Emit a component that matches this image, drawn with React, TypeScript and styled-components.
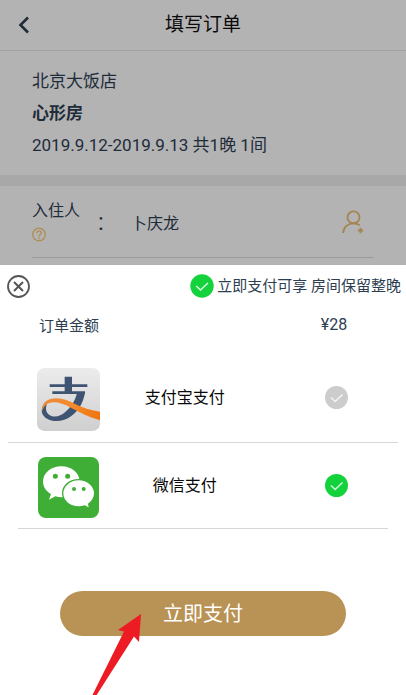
import React, { useState } from "react";
import styled, { createGlobalStyle } from "styled-components";

const GlobalStyle = createGlobalStyle`
  * { box-sizing: border-box; }
  body {
    margin: 0;
    background: #fff;
    color: #2c3e50;
    font-family: Roboto, "Noto Sans CJK SC", sans-serif;
  }
  button { padding: 0; border: 0; background: none; color: inherit; font: inherit; cursor: pointer; }
`;

const Screen = styled.div`
  display: flex;
  flex-direction: column;
  min-height: 100vh;
  overflow: hidden;
`;

const DimmedPage = styled.main`
  background: #b3b3b3;
  color: #202c3a;
  padding-bottom: 7px;
`;

const Header = styled.header`
  display: grid;
  grid-template-columns: 48px 1fr 48px;
  align-items: center;
  height: 51px;
  border-bottom: 1px solid #a2a2a2;
`;

const BackButton = styled.button`
  display: grid;
  place-items: center;
  height: 50px;
`;

const Title = styled.h1`
  margin: 0;
  color: #0a0a0a;
  font-size: 19px;
  font-weight: 400;
  line-height: 50px;
  text-align: center;
`;

const Stay = styled.section`
  padding: 14px 32px;
  border-bottom: 11px solid #a8a8a8;
`;

const StayLine = styled.p<{ $strong?: boolean }>`
  margin: 0;
  font-size: 17px;
  font-weight: ${(p) => (p.$strong ? 700 : 400)};
  line-height: 32px;
`;

const Guest = styled.section`
  display: flex;
  align-items: center;
  height: 72px;
  margin: 0 32px;
  border-bottom: 1px solid #969a9f;
  font-size: 16px;
`;

const GuestLabel = styled.div`
  display: flex;
  flex-direction: column;
  align-items: flex-start;
  gap: 4px;
  width: 66px;
  padding-bottom: 2px;
  line-height: 24px;
`;

const HelpButton = styled.button`
  display: flex;
`;

const Colon = styled.span`
  width: 33px;
  font-size: 24px;
  line-height: 24px;
`;

const GuestName = styled.span`
  flex: 1;
`;

const AddGuest = styled.button`
  display: flex;
  margin-right: 10px;
`;

const Sheet = styled.section`
  flex: 1;
  background: #fff;
`;

const Notice = styled.div`
  display: flex;
  align-items: center;
  justify-content: space-between;
  height: 42px;
  padding: 0 5px 0 7px;
`;

const CloseButton = styled.button`
  display: flex;
`;

const NoticeText = styled.span`
  display: flex;
  align-items: center;
  gap: 3px;
  font-size: 15px;
  line-height: 24px;
`;

const Columns = styled.div`
  display: grid;
  grid-template-columns: 34% 23% 1fr 34%;
  align-items: center;
  justify-items: center;
`;

const AmountRow = styled(Columns)`
  height: 34px;
  margin-bottom: 2px;
  font-size: 15px;
`;

const Amount = styled.span`
  grid-column: 4;
  padding-right: 6px;
  font-size: 16px;
`;

const Methods = styled.fieldset`
  margin: 0;
  padding: 0;
  border: 0;
`;

const Method = styled(Columns).attrs({ as: "label" })<{ $tall?: boolean }>`
  height: ${(p) => (p.$tall ? 99 : 85)}px;
  padding-top: ${(p) => (p.$tall ? 10 : 0)}px;
  color: #0a0a0a;
  font-size: 16px;
  white-space: nowrap;
  cursor: pointer;
`;

const MethodLogo = styled.span`
  display: flex;
  padding: 3px 2px 0 0;
`;

const MethodName = styled.span`
  padding-bottom: 4px;
`;

const Divider = styled.hr<{ $inset: number }>`
  height: 1px;
  margin: 0 ${(p) => p.$inset}px;
  border: 0;
  background: #d6d6d6;
`;

const RadioMark = styled.span`
  display: grid;
  grid-column: 4;
  place-items: center;
  > * { grid-area: 1 / 1; }
  > svg { pointer-events: none; }
`;

const Radio = styled.input`
  appearance: none;
  width: 23px;
  height: 23px;
  margin: 0;
  border-radius: 50%;
  background: #ccc;
  cursor: pointer;
  &:checked { background: #14d23c; }
`;

const PayArea = styled.div`
  position: relative;
  width: 70.5%;
  margin: 62px auto 0;
`;

const PayButton = styled.button`
  display: block;
  width: 100%;
  height: 45px;
  border-radius: 23px;
  background: #b99256;
  color: #fff;
  font-size: 20px;
  line-height: 44px;
`;

const Pointer = styled.svg`
  position: absolute;
  top: 23px;
  left: 32px;
  pointer-events: none;
`;

const Tick = () => (
  <svg width="23" height="23" viewBox="0 0 23 23" fill="none" aria-hidden="true">
    <path d="M6 11.5 10.2 15.5 17.5 8.5" stroke="#fff" strokeOpacity=".8" strokeWidth="1.5" />
  </svg>
);

const NoticeCheck = () => (
  <svg width="24" height="24" viewBox="0 0 24 24" fill="none" aria-hidden="true">
    <circle cx="12" cy="12" r="11.7" fill="#14d23c" />
    <path d="M6.2 12 10.5 16 18 9" stroke="#fff" strokeOpacity=".85" strokeWidth="1.5" />
  </svg>
);

const AlipayLogo = () => (
  <svg width="63" height="63" viewBox="0 0 189 189" aria-hidden="true">
    <defs>
      <linearGradient id="silver" x1="0" y1="0" x2="0" y2="1">
        <stop offset="0" stopColor="#ececec" />
        <stop offset="1" stopColor="#cfcfcf" />
      </linearGradient>
      <linearGradient id="orange" x1="0" y1="0" x2="1" y2="0">
        <stop offset="0" stopColor="#e98a3c" />
        <stop offset=".5" stopColor="#f58a2d" />
        <stop offset="1" stopColor="#ee7510" />
      </linearGradient>
    </defs>
    <rect width="189" height="189" rx="22" fill="url(#silver)" />
    <g fill="#3f5472">
      <path d="M83 26h22v23h46v8h-46v13h39v8H46v-8h37V57H38v-8h45z" />
      <path d="M120 74h24c-6 32-20 54-41 70-21 17-54 19-73 8-17-10-20-27-10-42l10-4c-5 15-4 26 6 34 14 10 34 6 48-7 18-16 31-35 36-59z" />
    </g>
    <path
      d="M16 129c-3-17 7-32 25-36 24-6 48 2 72 14 26 13 51 20 76 24v26c-33-9-61-24-87-38-25-13-45-19-62-15-13 3-20 12-24 25z"
      fill="url(#orange)"
    />
  </svg>
);

const WechatLogo = () => (
  <svg width="61" height="61" viewBox="0 0 183 183" aria-hidden="true">
    <rect width="183" height="183" rx="24" fill="#3fae36" />
    <path
      d="M70 28c31 0 55 20 55 46 0 27-24 47-55 47-6 0-12-1-18-3l-19 10 6-17C24 102 15 89 15 74c0-26 24-46 55-46z"
      fill="#fff"
    />
    <path
      d="M122 68c27 0 48 18 48 41 0 13-7 24-18 32l3 14-15-8c-6 2-12 3-18 3-27 0-48-18-48-41s21-41 48-41z"
      fill="#fff"
      stroke="#3fae36"
      strokeWidth="4"
    />
    <g fill="#3fae36">
      <circle cx="52" cy="58" r="7.5" />
      <circle cx="89" cy="58" r="7.5" />
      <circle cx="108" cy="96" r="6" />
      <circle cx="137" cy="96" r="6" />
    </g>
  </svg>
);

export default function App() {
  const [method, setMethod] = useState("wechat");

  return (
    <Screen>
      <GlobalStyle />
      <DimmedPage>
        <Header>
          <BackButton aria-label="返回">
            <svg width="12" height="18" viewBox="0 0 12 18" fill="none">
              <path d="M10 1.5 2.5 9l7.5 7.5" stroke="#202c3a" strokeWidth="2.6" />
            </svg>
          </BackButton>
          <Title>填写订单</Title>
        </Header>
        <Stay>
          <StayLine>北京大饭店</StayLine>
          <StayLine $strong>心形房</StayLine>
          <StayLine>2019.9.12-2019.9.13 共1晚 1间</StayLine>
        </Stay>
        <Guest>
          <GuestLabel>
            入住人
            <HelpButton aria-label="入住人说明">
              <svg width="14" height="15" viewBox="0 0 14 15" fill="none" stroke="#b08c50" strokeWidth="1.3">
                <circle cx="7" cy="7.5" r="6.3" />
                <path d="M4.8 6.2c0-3 4.5-3 4.5-.3C9.3 7.5 7 7.5 7 9.5M7 10.4v1.5" />
              </svg>
            </HelpButton>
          </GuestLabel>
          <Colon>:</Colon>
          <GuestName>卜庆龙</GuestName>
          <AddGuest aria-label="选择入住人">
            <svg width="22" height="24" viewBox="0 0 22 24" fill="none" stroke="#a58450" strokeWidth="1.8">
              <circle cx="11.5" cy="7.4" r="6" />
              <path d="M1.2 23C1.5 17 6 13.400 11.5 13.400c2.500 0 4.500.6 6.200 1.800" />
              <path d="M18.500 17.800v5.400M15.800 20.500h5.400" />
            </svg>
          </AddGuest>
        </Guest>
      </DimmedPage>

      <Sheet role="dialog" aria-label="支付方式">
        <Notice>
          <CloseButton aria-label="关闭">
            <svg width="23" height="23" viewBox="0 0 23 23" fill="none" stroke="#555">
              <circle cx="11.5" cy="11.5" r="10.5" strokeWidth="1.8" />
              <path d="m7 7 9 9M16 7l-9 9" strokeWidth="2" />
            </svg>
          </CloseButton>
          <NoticeText>
            <NoticeCheck />
            立即支付可享 房间保留整晚
          </NoticeText>
        </Notice>
        <AmountRow>
          <span>订单金额</span>
          <Amount>¥28</Amount>
        </AmountRow>
        <Methods aria-label="支付方式">
          <Method $tall>
            <MethodLogo>
              <AlipayLogo />
            </MethodLogo>
            <MethodName>支付宝支付</MethodName>
            <RadioMark>
              <Radio type="radio" name="method" checked={method === "alipay"} onChange={() => setMethod("alipay")} />
              <Tick />
            </RadioMark>
          </Method>
          <Divider $inset={8} />
          <Method>
            <MethodLogo>
              <WechatLogo />
            </MethodLogo>
            <MethodName>微信支付</MethodName>
            <RadioMark>
              <Radio type="radio" name="method" checked={method === "wechat"} onChange={() => setMethod("wechat")} />
              <Tick />
            </RadioMark>
          </Method>
          <Divider $inset={18} />
        </Methods>
        <PayArea>
          <PayButton type="button">立即支付</PayButton>
          <Pointer width="50" height="82" viewBox="0 0 50 82" aria-hidden="true">
            <path d="M49 0 26 16l6 1.500L0 82h4l38-59.500 5 5.500z" fill="#ed1c24" />
          </Pointer>
        </PayArea>
      </Sheet>
    </Screen>
  );
}
